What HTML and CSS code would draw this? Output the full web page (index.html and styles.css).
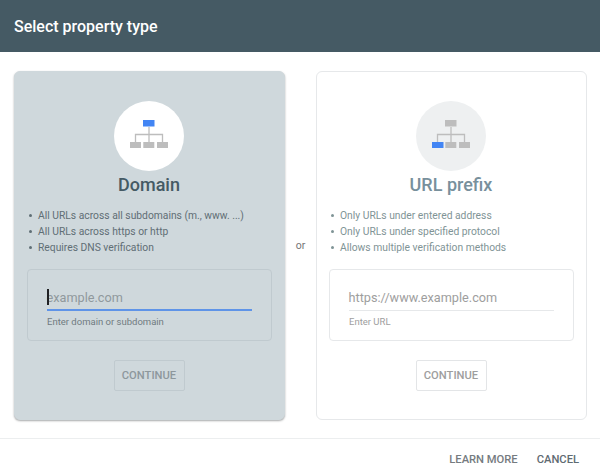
FILE: index.html
```html
<!DOCTYPE html>
<html lang="en">
<head>
<meta charset="utf-8">
<title>Select property type</title>
<link rel="stylesheet" href="styles.css">
</head>
<body>
<div class="dialog">
  <header class="head">Select property type</header>
  <main class="choices">
    <section class="card card-active">
      <div class="badge">
        <svg width="46" height="32" viewBox="0 0 46 32" aria-hidden="true">
          <path class="wire" d="M23 7V22M9.500 22V14.500H36.500V22" />
          <rect class="blue" x="17" y="0" width="11.500" height="6.500" />
          <rect class="grey" x="4" y="22" width="11" height="6" />
          <rect class="grey" x="17.300" y="22" width="11" height="6" />
          <rect class="grey" x="31" y="22" width="11" height="6" />
        </svg>
      </div>
      <h2 class="name">Domain</h2>
      <ul class="points">
        <li>All URLs across all subdomains (m., www. ...)</li>
        <li>All URLs across https or http</li>
        <li>Requires DNS verification</li>
      </ul>
      <div class="field">
        <div class="entry entry-focus"><span class="caret"></span>example.com</div>
        <div class="hint">Enter domain or subdomain</div>
      </div>
      <div class="btn">CONTINUE</div>
    </section>
    <div class="or">or</div>
    <section class="card">
      <div class="badge">
        <svg width="46" height="32" viewBox="0 0 46 32" aria-hidden="true">
          <path class="wire" d="M23 7V22M9.500 22V14.500H36.500V22" />
          <rect class="grey" x="17" y="0" width="11.500" height="6.500" />
          <rect class="blue" x="4" y="22" width="11.500" height="6" />
          <rect class="grey" x="17.300" y="22" width="11" height="6" />
          <rect class="grey" x="31" y="22" width="11" height="6" />
        </svg>
      </div>
      <h2 class="name">URL prefix</h2>
      <ul class="points">
        <li>Only URLs under entered address</li>
        <li>Only URLs under specified protocol</li>
        <li>Allows multiple verification methods</li>
      </ul>
      <div class="field">
        <div class="entry">https://www.example.com</div>
        <div class="hint">Enter URL</div>
      </div>
      <div class="btn">CONTINUE</div>
    </section>
  </main>
  <footer class="foot">
    <span class="link link-muted">LEARN MORE</span>
    <span class="link">CANCEL</span>
  </footer>
</div>
</body>
</html>
```
FILE: styles.css
```css
html, body {
  margin: 0;
  padding: 0;
  background: #fff;
}
.dialog {
  width: 600px;
  height: 476px;
  font-family: Roboto, "Liberation Sans", sans-serif;
  overflow: hidden;
}
.head {
  height: 52px;
  box-sizing: border-box;
  padding: 1px 14px 0;
  background: #455a64;
  color: #fff;
  font-size: 16px;
  font-weight: 500;
  line-height: 52px;
}
.choices {
  display: flex;
  padding: 19px 14px 18px;
  height: 349px;
  box-sizing: content-box;
}
.or {
  width: 31px;
  flex: none;
  text-align: center;
  align-self: center;
  margin-top: -1px;
  font-size: 10.500px;
  color: #757575;
}
.card {
  flex: none;
  width: 271px;
  height: 349px;
  box-sizing: border-box;
  padding: 29px 12px 0;
  border: 1px solid #e6e8ea;
  border-radius: 6px;
  background: #fff;
  display: flex;
  flex-direction: column;
  align-items: center;
}
.card .name { color: #78909c; }
.card .points { color: #7f9496; }
.card-active {
  background: #cfd8dc;
  border-color: #cfd8dc;
  box-shadow: 0 1px 2px rgba(60, 64, 67, .45);
}
.card-active .name { color: #455a64; }
.card-active .points { color: #5f6e75; }
.badge {
  width: 70px;
  height: 70px;
  margin-right: 1px;
  border-radius: 50%;
  background: #eef0f1;
  display: flex;
  align-items: center;
  justify-content: center;
}
.card-active .badge { background: #fff; }
.badge svg { display: block; }
.wire { fill: none; stroke: #bdbdbd; stroke-width: 1.300; }
.blue { fill: #4285f4; }
.grey { fill: #bdbdbd; }
.name {
  margin: 2px 1px 0 0;
  font-size: 18px;
  font-weight: 500;
  line-height: 24px;
}
.points {
  align-self: stretch;
  margin: 11px 0 0;
  padding: 0 0 0 11px;
  font-size: 10.300px;
  line-height: 16px;
  list-style: none;
}
.points li::before {
  content: "";
  display: inline-block;
  width: 3px;
  height: 3px;
  margin: 0 6px 2px -9px;
  border-radius: 50%;
  background: currentColor;
}
.field {
  align-self: stretch;
  box-sizing: border-box;
  height: 72px;
  margin-top: 13px;
  padding: 18px 19px 0;
  border: 1px solid #e6e8ea;
  border-radius: 4px;
  background: #fff;
}
.card-active .field {
  background: transparent;
  border-color: #c0cacf;
}
.entry {
  height: 22px;
  border-bottom: 1px solid #e6e8ea;
  color: #9e9e9e;
  font-size: 12.700px;
  line-height: 20px;
  text-indent: -0.500px;
  position: relative;
}
.entry-focus {
  border-bottom: 2px solid #5f94e8;
  height: 21px;
  color: #90989c;
}
.caret {
  position: absolute;
  left: 0;
  top: 1px;
  width: 1.500px;
  height: 16px;
  background: #202124;
}
.hint {
  margin-top: 4px;
  font-size: 9.500px;
  line-height: 14px;
  color: #9e9e9e;
}
.card-active .hint { color: #6f7b81; }
.btn {
  margin: 19px 1px 0 0;
  width: 71px;
  height: 31px;
  box-sizing: border-box;
  border: 1px solid #e3e5e7;
  border-radius: 2px;
  color: #9e9e9e;
  font-size: 11.200px;
  font-weight: 500;
  line-height: 29px;
  text-align: center;
}
.card-active .btn {
  border-color: #c0cacf;
  color: #8d979c;
}
.foot {
  border-top: 1px solid #eceeef;
  display: flex;
  justify-content: flex-end;
  align-items: center;
  gap: 19px;
  height: 41px;
  padding-right: 21px;
}
.link {
  font-size: 11.200px;
  font-weight: 500;
  color: #5f6b72;
}
.link-muted { color: #757b80; }
```
